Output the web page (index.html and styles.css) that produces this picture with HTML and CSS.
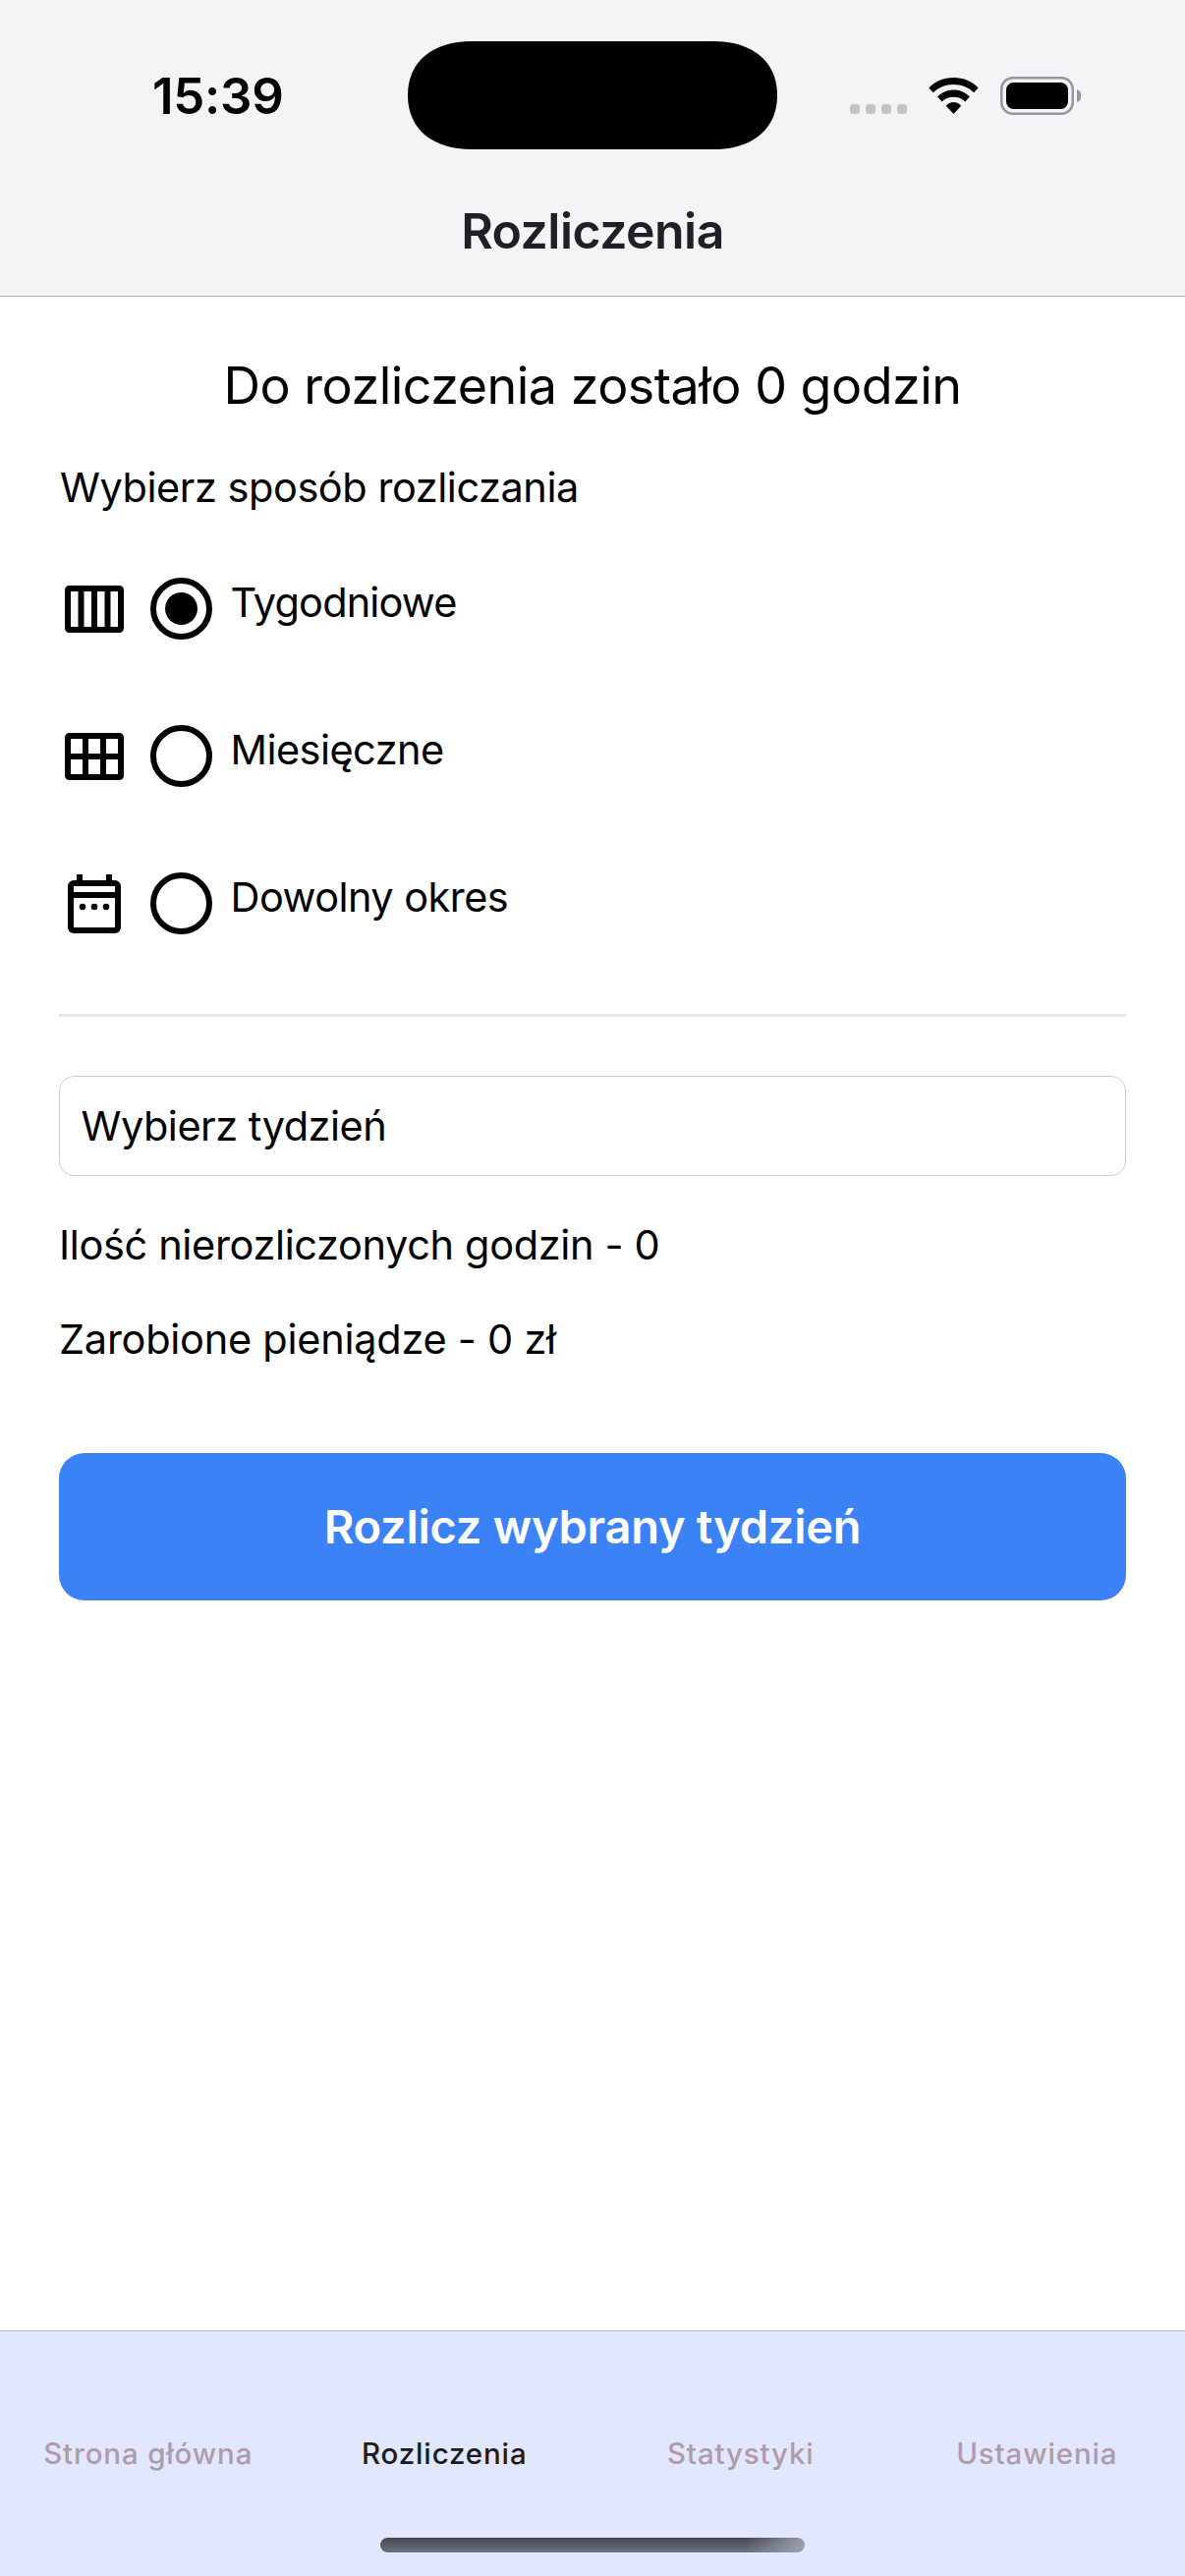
FILE: index.html
```html
<!DOCTYPE html>
<html lang="pl">
<head>
<meta charset="utf-8">
<title>Rozliczenia</title>
<link rel="stylesheet" href="styles.css">
</head>
<body>
<div class="screen">
  <header class="header">
    <div class="status">
      <div class="time">15:39</div>
      <svg class="island" viewBox="0 0 376 110"><path d="M65 0H311C350 0 376 20 376 55S350 110 311 110H65C26 110 0 90 0 55S26 0 65 0Z"/></svg>
      <div class="indicators">
        <div class="signal"><i></i><i></i><i></i><i></i></div>
        <svg class="wifi" viewBox="0 0 51 37">
          <path d="M25.500 0C35.600 0 44.600 3.700 50.600 10.500L46.200 15.200C41 10 34 6.900 25.500 6.900S10 10 4.800 15.200L.4 10.500C6.400 3.700 15.400 0 25.500 0Z"/>
          <path d="M25.500 12.500C32.300 12.500 38 15.200 41.800 19.600L37.400 24.500C34.500 21.500 30.400 19.700 25.500 19.700S16.500 21.500 13.600 24.500L9.200 19.600C13 15.200 18.700 12.500 25.500 12.500Z"/>
          <path d="M25.500 25C28.500 25 31.200 26.300 33.200 28.700L25.500 37L17.800 28.700C19.800 26.300 22.500 25 25.500 25Z"/>
        </svg>
        <svg class="battery" viewBox="0 0 82 39">
          <rect x="1.250" y="1.250" width="72.500" height="36.500" rx="11.500" fill="none" stroke="#98989c" stroke-width="2.500"/>
          <rect x="6" y="6" width="63" height="27" rx="7.500"/>
          <path d="M78 13C84 15 84 24 78 26Z" fill="#98989c"/>
        </svg>
      </div>
    </div>
    <h1 class="title">Rozliczenia</h1>
  </header>

  <main class="content">
    <h2 class="summary">Do rozliczenia zostało 0 godzin</h2>
    <p class="text prompt">Wybierz sposób rozliczania</p>
    <div class="options">
      <div class="option">
        <svg class="icon" viewBox="0 0 24 24"><path fill-rule="evenodd" d="M3.500 4h17A1.500 1.500 0 0 1 22 5.500v13a1.500 1.500 0 0 1-1.500 1.500h-17A1.500 1.500 0 0 1 2 18.500v-13A1.500 1.500 0 0 1 3.500 4ZM4 6v12h2.500V6ZM8.500 6v12H11V6ZM13 6v12h2.500V6ZM17.500 6v12H20V6Z"/></svg>
        <svg class="radio" viewBox="0 0 63 63"><circle class="ring" cx="31.500" cy="31.500" r="28.500"/><circle cx="31.500" cy="31.500" r="16.500"/></svg>
        <span class="text label week">Tygodniowe</span>
      </div>
      <div class="option">
        <svg class="icon" viewBox="0 0 24 24"><path fill-rule="evenodd" d="M3.500 4h17A1.500 1.500 0 0 1 22 5.500v13a1.500 1.500 0 0 1-1.500 1.500h-17A1.500 1.500 0 0 1 2 18.500v-13A1.500 1.500 0 0 1 3.500 4ZM4 6v5h4V6ZM10 6v5h4V6ZM16 6v5h4V6ZM4 13v5h4v-5ZM10 13v5h4v-5ZM16 13v5h4v-5Z"/></svg>
        <svg class="radio" viewBox="0 0 63 63"><circle class="ring" cx="31.500" cy="31.500" r="28.500"/></svg>
        <span class="text label">Miesięczne</span>
      </div>
      <div class="option">
        <svg class="icon" viewBox="0 0 24 24"><path fill-rule="evenodd" d="M6 2h2v2h8V2h2v2h1a2 2 0 0 1 2 2v14a2 2 0 0 1-2 2H5a2 2 0 0 1-2-2V6a2 2 0 0 1 2-2h1ZM5 6v2h14V6ZM5 10v10h14V10Z"/><circle cx="8" cy="13" r="1.100"/><circle cx="12" cy="13" r="1.100"/><circle cx="16" cy="13" r="1.100"/></svg>
        <svg class="radio" viewBox="0 0 63 63"><circle class="ring" cx="31.500" cy="31.500" r="28.500"/></svg>
        <span class="text label">Dowolny okres</span>
      </div>
    </div>
    <hr class="divider">
    <div class="text picker">Wybierz tydzień</div>
    <p class="text hours">Ilość nierozliczonych godzin - 0</p>
    <p class="text money">Zarobione pieniądze - 0 zł</p>
    <button class="submit">Rozlicz wybrany tydzień</button>
  </main>

  <nav class="tabs">
    <div class="tab-row">
      <a class="tab">Strona główna</a>
      <a class="tab active">Rozliczenia</a>
      <a class="tab">Statystyki</a>
      <a class="tab">Ustawienia</a>
    </div>
    <div class="home-bar"></div>
  </nav>
</div>
</body>
</html>
```
FILE: styles.css
```css
* { box-sizing: border-box; }
body { margin: 0; background: #fff; color: #000; font-family: Inter, "Liberation Sans", sans-serif; }
h1, h2, p { margin: 0; font-weight: 400; }
svg { display: block; flex: none; }

.screen { width: 1206px; height: 2622px; display: flex; flex-direction: column; overflow: hidden; }

.header { height: 302px; flex: none; background: #f3f4f6; border-bottom: 1px solid #b0b1b3; }
.status { display: grid; grid-template-columns: 415px 376px 415px; height: 205px; padding-top: 42px; align-items: start; }
.time { padding: 26px 0 0 155px; font-size: 51px; line-height: 60px; font-weight: 600; letter-spacing: -0.3px; white-space: nowrap; }
.island { width: 376px; height: 110px; }
.indicators { display: flex; padding: 36px 0 0 74px; }
.signal { display: flex; gap: 6px; padding-top: 28px; }
.signal i { width: 10px; height: 10px; border-radius: 3.5px; background: #c3c4c6; }
.wifi { width: 51px; height: 37px; margin: 1px 22px 0; }
.battery { width: 82px; height: 39px; }
.title { text-align: center; color: #1f2023; font-size: 50px; line-height: 60px; font-weight: 600; letter-spacing: -0.53px; }

.content { flex: 1; min-height: 0; padding: 59px 60px 0; }
.summary { text-align: center; font-size: 52px; line-height: 64px; letter-spacing: -0.5px; }
.text { font-size: 41.5px; line-height: 50px; letter-spacing: -0.5px; white-space: nowrap; }
.prompt { margin-top: 46px; padding-left: 1px; letter-spacing: -0.46px; }
.options { padding: 23.5px 0 37.5px; }
.option { display: flex; align-items: center; height: 150px; }
.icon { width: 72px; height: 72px; }
.radio { width: 63px; height: 63px; margin: 0 18.5px 0 21px; }
.ring { fill: none; stroke: #000; stroke-width: 6; }
.label { padding-bottom: 14px; letter-spacing: -0.55px; }
.week { letter-spacing: -0.85px; }
.divider { height: 3px; margin: 0; border: 0; background: #e5e7eb; }
.picker { display: flex; align-items: center; height: 102px; margin-top: 60px; padding-left: 21.5px; border: 1px solid #cecece; border-radius: 15px; }
.hours { margin-top: 45px; letter-spacing: -0.36px; }
.money { margin-top: 46px; letter-spacing: -0.26px; }
.submit { display: block; width: 100%; height: 150px; margin-top: 91px; padding: 0; border: 0; border-radius: 26px; background: #3b82f6; color: #fff; font-family: inherit; font-size: 47px; line-height: 60px; font-weight: 600; letter-spacing: -0.26px; }

.tabs { height: 250px; flex: none; background: #e0e7ff; border-top: 1px solid #b3b4b8; }
.tab-row { display: grid; grid-template-columns: repeat(4, 1fr); padding-top: 104px; }
.tab { text-align: center; color: #b09ba8; font-size: 29.5px; line-height: 40px; font-weight: 500; letter-spacing: 0.84px; }
.active { color: #1c1c1e; }
.home-bar { width: 432px; height: 15px; margin: 66px auto 0; border-radius: 8px; background: linear-gradient(100deg, transparent 86%, #9ca1b2 100%), linear-gradient(#464851, #6e7080); }
```
